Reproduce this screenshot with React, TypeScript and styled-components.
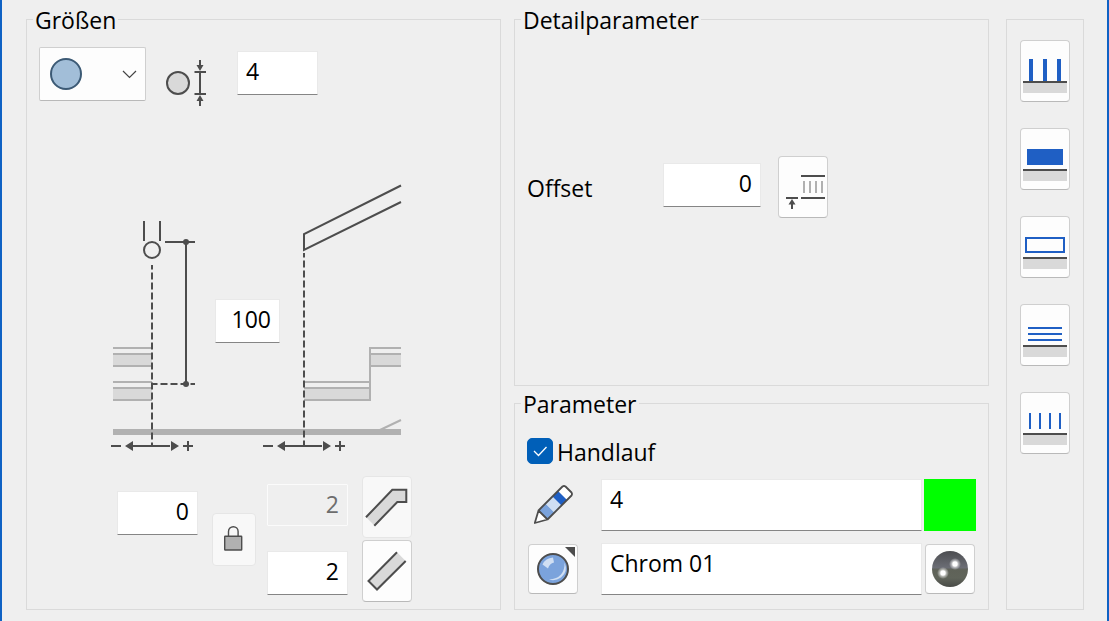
import React, { useState } from "react";
import styled, { createGlobalStyle, css } from "styled-components";

const ink = "#4d4d4d";
const blue = "#1f5fc4";
const grey = "#d9d9d9";
const stepGrey = "#b1b1b1";

const GlobalStyle = createGlobalStyle`
  *, *::before, *::after { box-sizing: border-box; }
  body {
    margin: 0;
    background: #efefef;
    color: #000;
    font: 23px/30px "Open Sans", "Noto Sans", sans-serif;
  }
  svg { display: block; flex: none; overflow: visible; }
`;

const Page = styled.main`
  display: grid;
  grid-template-columns: minmax(0, 1fr) 13px minmax(0, 1fr) 17px 78px;
  min-height: 100vh;
  padding: 3px 23px 11px 24px;
  border: solid #0f62c4;
  border-width: 0 2px;
`;

const LeftColumn = styled.div`
  display: flex;
  flex-direction: column;
`;

const MiddleColumn = styled.div`
  grid-column: 3;
  display: flex;
  flex-direction: column;
  gap: 1px;
`;

const Group = styled.fieldset<{ $grow?: boolean }>`
  flex: ${(p) => (p.$grow ? "1" : "none")};
  min-width: 0;
  margin: 0;
  padding: 0 12px;
  border: 1px solid #dadada;
`;

const Legend = styled.legend`
  margin-left: -6px;
  padding: 2px 2px 0;
`;

const TypeBar = styled.nav`
  grid-column: 5;
  display: flex;
  flex-direction: column;
  align-items: center;
  gap: 26px;
  margin-top: 16px;
  padding: 20px 0;
  border: 1px solid #dadada;
`;

const ToolButton = styled.button<{ $size?: "tall" | "square" | "lock" }>`
  flex: none;
  display: block;
  width: 50px;
  height: 62px;
  padding: 0;
  border: 1px solid #cfcfcf;
  border-bottom-color: #b9b9b9;
  border-radius: 4px;
  background: #fdfdfd;
  ${(p) => p.$size === "square" && css`height: 50px;`}
  ${(p) => p.$size === "lock" && css`width: 44px; height: 53px;`}
  &:disabled {
    border-color: #e6e6e6;
    background: #f8f8f8;
  }
  svg { margin: -1px; }
`;

const Field = styled.input<{ $width?: number; $align?: string }>`
  width: ${(p) => (p.$width ? `${p.$width}px` : "100%")};
  height: 44px;
  min-width: 0;
  margin: 0;
  padding: 0 8px 5px;
  border: 1px solid #e9e9e9;
  border-bottom-color: #858585;
  border-radius: 1px;
  background: #fff;
  color: #000;
  font: inherit;
  text-align: ${(p) => p.$align ?? "right"};
  &:disabled {
    height: 42px;
    padding-bottom: 3px;
    border-color: #fbfbfb;
    background: #efefef;
    color: #6d6d6d;
  }
`;

const TallField = styled(Field)`
  height: 52px;
  padding-bottom: 12px;
`;

const ProfileRow = styled.div`
  display: flex;
  align-items: flex-start;
  padding-top: 12px;
`;

const Combo = styled.label`
  display: grid;
  width: 107px;
  height: 54px;
  margin-right: 20px;
  > * { grid-area: 1 / 1; }
  svg { pointer-events: none; }
`;

const ComboSelect = styled.select`
  appearance: none;
  width: 100%;
  height: 100%;
  border: 1px solid #cfcfcf;
  border-bottom-color: #b9b9b9;
  border-radius: 2px;
  background: #fdfdfd;
`;

const DiameterMark = styled.div`
  padding-top: 13px;
`;

const DiameterField = styled.div`
  margin: 4px 0 0 30px;
`;

const Diagram = styled.div`
  position: relative;
  width: 294px;
  margin: 78px 0 20px 71px;
`;

const DiagramField = styled.div`
  position: absolute;
  left: 105px;
  top: 115px;
`;

const EndRow = styled.div`
  display: flex;
  align-items: center;
  padding: 0 0 7px 78px;
`;

const StartField = styled.div`
  align-self: flex-start;
  margin: 15px 14px 0 0;
`;

const EndFields = styled.div`
  align-self: stretch;
  display: flex;
  flex-direction: column;
  justify-content: space-between;
  margin: 0 14px 0 11px;
  padding: 8px 0 7px;
`;

const EndButtons = styled.div`
  display: grid;
  gap: 2px;
`;

const OffsetRow = styled.div`
  display: grid;
  grid-template-columns: 136px 98px 50px;
  align-items: center;
  padding-top: 121px;
  ${Field} { margin-bottom: 4px; }
  ${ToolButton} { margin-left: 17px; }
`;

const Caption = styled.span`
  display: block;
  padding-top: 2px;
`;

const CheckRow = styled.label`
  display: flex;
  align-items: center;
  gap: 4px;
  height: 30px;
  margin: 17px 0 13px;
`;

const CheckBox = styled.span`
  display: grid;
  width: 26px;
  height: 26px;
  > * { grid-area: 1 / 1; }
  svg { pointer-events: none; }
`;

const CheckInput = styled.input`
  appearance: none;
  width: 26px;
  height: 26px;
  margin: 0;
  border: 1px solid #005fb8;
  border-radius: 5px;
  background: #fff;
  &:checked { background: #005fb8; }
`;

const ParameterGrid = styled.div`
  display: grid;
  grid-template-columns: 52px minmax(0, 1fr) 52px;
  row-gap: 12px;
  align-items: center;
  justify-items: center;
  padding-bottom: 14px;
`;

const FieldCell = styled.div`
  display: flex;
  justify-self: stretch;
  padding: 0 2px 0 22px;
`;

const Swatch = styled.button`
  width: 52px;
  height: 52px;
  padding: 0;
  border: 0;
  background: #0f0;
`;

function Profile() {
  return (
    <svg width="107" height="54" viewBox="39 47 107 54" fill="none" aria-hidden="true">
      <circle cx="66" cy="74" r="15" fill="#a2bed8" stroke="#3c5a75" strokeWidth="2" />
      <path d="M123 71l6.500 6.500L136 71" stroke="#444" strokeWidth="1.200" />
    </svg>
  );
}

function Diameter() {
  return (
    <svg width="41" height="46" viewBox="166 60 41 46" aria-hidden="true">
      <circle cx="178" cy="83" r="11" fill={grey} stroke={ink} strokeWidth="2" />
      <path d="M194.500 72H206M194.500 94H206M200 72V94M200 60V66M200 100V106" stroke={ink} strokeWidth="2" />
      <path d="M196.500 65h7L200 71zM196.500 101h7L200 95z" fill={ink} />
    </svg>
  );
}

function Shift({ x }: { x: number }) {
  return (
    <g transform={`translate(${x} 446)`}>
      <path d="M-41 0h10M-22 0h40M31 0h10M36-5V5" stroke={ink} strokeWidth="2" />
      <path d="M-27 0l8-5v10zM27 0l-8-5v10z" fill={ink} />
    </g>
  );
}

function StairDrawing() {
  return (
    <svg width="294" height="272" viewBox="110 184 294 272" fill="none" aria-hidden="true">
      <path d="M113 354h39v12h-39zM113 388h39v12h-39zM304 388h66v12h-66zM370 354h31v12h-31z" fill={grey} />
      <path
        d="M113 348h39M113 354h39M113 366h39M113 382h39M113 388h39M113 400h39M304 382h66M304 388h66M304 400h67M370 401V347M370 348h31M370 354h31M370 366h31M380 430l21-10"
        stroke={stepGrey}
        strokeWidth="2"
      />
      <path d="M113 429h288v6H113z" fill={stepGrey} />
      <g stroke={ink} strokeWidth="2">
        <path d="M144 221v20M160 221v20M165 242h30M186 242v142" />
        <circle cx="152" cy="250" r="8" />
        <path d="M401 185.500L304 234V250L401 202" />
        <path d="M152 265V445" strokeDasharray="7 3" strokeDashoffset="2.500" />
        <path d="M304 253V445" strokeDasharray="7 3" strokeDashoffset="2.500" />
        <path d="M152 384h43" strokeDasharray="7 3" strokeDashoffset="1.500" />
      </g>
      <circle cx="186" cy="242" r="3" fill={ink} />
      <circle cx="186" cy="384" r="3" fill={ink} />
      <Shift x={152} />
      <Shift x={304} />
    </svg>
  );
}

function Lock() {
  return (
    <svg width="44" height="53" viewBox="212 513 44 53" aria-hidden="true">
      <path d="M228.500 536v-4.500a4.800 4.800 0 0 1 9.600 0v4.500" fill="none" stroke={ink} strokeWidth="1.400" />
      <rect x="224.700" y="536.300" width="17" height="13.700" rx=".5" fill={stepGrey} stroke={ink} strokeWidth="1.400" />
    </svg>
  );
}

function BentEnd() {
  return (
    <svg width="50" height="62" viewBox="362 476 50 62" aria-hidden="true">
      <path d="M366 517l26.300-27.300h14V502h-9l-23 23.500z" fill={grey} />
      <path d="M366 517.300l26.300-27.600h14V502h-9l-23 23.700" fill="none" stroke={ink} strokeWidth="2" />
    </svg>
  );
}

function StraightEnd() {
  return (
    <svg width="50" height="62" viewBox="362 540 50 62" aria-hidden="true">
      <path d="M397 552.300L368.500 581l8.500 8.500 28.700-28.500z" fill={grey} />
      <path d="M397 552.300L368.500 581l8.500 8.500 28.700-28.500" fill="none" stroke={ink} strokeWidth="2" />
    </svg>
  );
}

function OffsetIcon() {
  return (
    <svg width="50" height="62" viewBox="778 156 50 62" aria-hidden="true">
      <path d="M804 181v12M810 181v12M816 181v12M822 181v12" stroke={stepGrey} strokeWidth="2" />
      <path d="M801 176h24M801 198h24M786 198h12M792 203v6" stroke={ink} strokeWidth="2" />
      <path d="M788.500 204.500h7L792 199z" fill={ink} />
    </svg>
  );
}

function Pencil() {
  return (
    <svg width="52" height="52" viewBox="527 479 52 52" aria-hidden="true">
      <path d="M538.500 510.500l-3.500 12.700 12.700-3.700-4.200-5z" fill="#fff" />
      <path d="M558 491l4.500-4.500q1.500-1 3 0l6 6q1 1.500 0 3l-4.500 4.500z" fill="#fff" />
      <path d="M538.500 510.500l7-7 9 9-7 7z" fill="#7ba3dc" />
      <path d="M545.500 503.500l7-7 9 9-7 7z" fill="#d0dff3" />
      <path d="M552.500 496.500l5.500-5.500 9 9-5.500 5.500z" fill={blue} />
      <path
        d="M538.500 510.500l24-24q1.500-1 3 0l6 6q1 1.500 0 3l-24 24-12.700 3.500zl9 9"
        fill="none"
        stroke={ink}
        strokeWidth="1.800"
        strokeLinejoin="round"
      />
    </svg>
  );
}

function MaterialBall() {
  return (
    <svg width="50" height="50" viewBox="528 544 50 50" aria-hidden="true">
      <path d="M565 547h10v10z" fill={ink} />
      <circle cx="553" cy="569" r="15" fill="#7ba3dc" stroke={ink} strokeWidth="2" />
      <path d="M542.500 564.500q3-6.500 10.500-7l1 5q-4.500 1-6 6z" fill="#d0dff3" />
      <path d="M564.500 562.500q4 9-3.500 15-6 4-12 2 8-.5 12-5 4-5 3.500-12z" fill="#d0dff3" />
    </svg>
  );
}

function ChromeBall() {
  return (
    <svg width="50" height="50" viewBox="925 544 50 50" aria-hidden="true">
      <defs>
        <linearGradient id="chrome" x1="0" y1="0" x2="0" y2="1">
          <stop offset="0" stopColor="#4c4d50" />
          <stop offset=".46" stopColor="#6b6d75" />
          <stop offset=".52" stopColor="#5f6258" />
          <stop offset=".75" stopColor="#60645a" />
          <stop offset="1" stopColor="#484a46" />
        </linearGradient>
        <radialGradient id="glint">
          <stop offset=".35" stopColor="#fff" />
          <stop offset=".6" stopColor="#fff" stopOpacity=".5" />
          <stop offset="1" stopColor="#fff" stopOpacity="0" />
        </radialGradient>
      </defs>
      <circle cx="950" cy="569" r="18" fill="url(#chrome)" />
      <circle cx="955" cy="564" r="6" fill="url(#glint)" />
      <circle cx="943" cy="573" r="6" fill="url(#glint)" />
    </svg>
  );
}

const railTypes = [
  { name: "Pfosten", art: <path d="M11 41V19M25 41V19M39 41V19" stroke={blue} strokeWidth="4" /> },
  { name: "Platte", art: <rect x="7" y="21" width="36" height="16" fill={blue} /> },
  { name: "Rahmen", art: <rect x="6" y="22" width="38" height="14" fill="none" stroke={blue} strokeWidth="2" /> },
  { name: "Gurte", art: <path d="M8 24h34M8 30h34M8 36h34" stroke={blue} strokeWidth="2" /> },
  { name: "Stäbe", art: <path d="M10 21v16M20 21v16M30 21v16M40 21v16" stroke={blue} strokeWidth="2" /> },
];

export default function App() {
  const [handrail, setHandrail] = useState(true);
  return (
    <>
      <GlobalStyle />
      <Page>
        <LeftColumn>
          <Group $grow>
            <Legend>Größen</Legend>
            <ProfileRow>
              <Combo>
                <ComboSelect aria-label="Profil">
                  <option value="round" aria-label="Rund" />
                </ComboSelect>
                <Profile />
              </Combo>
              <DiameterMark>
                <Diameter />
              </DiameterMark>
              <DiameterField>
                <Field $width={81} $align="left" defaultValue="4" aria-label="Durchmesser" />
              </DiameterField>
            </ProfileRow>
            <Diagram>
              <StairDrawing />
              <DiagramField>
                <Field $width={65} defaultValue="100" aria-label="Höhe" />
              </DiagramField>
            </Diagram>
            <EndRow>
              <StartField>
                <Field $width={81} defaultValue="0" aria-label="Anfang" />
              </StartField>
              <ToolButton $size="lock" disabled aria-label="Sperren">
                <Lock />
              </ToolButton>
              <EndFields>
                <Field $width={81} defaultValue="2" disabled aria-label="Ende oben" />
                <Field $width={81} defaultValue="2" aria-label="Ende unten" />
              </EndFields>
              <EndButtons>
                <ToolButton disabled aria-label="Abgewinkeltes Ende">
                  <BentEnd />
                </ToolButton>
                <ToolButton aria-label="Gerades Ende">
                  <StraightEnd />
                </ToolButton>
              </EndButtons>
            </EndRow>
          </Group>
        </LeftColumn>

        <MiddleColumn>
          <Group $grow>
            <Legend>Detailparameter</Legend>
            <OffsetRow>
              <label htmlFor="offset">
                <Caption>Offset</Caption>
              </label>
              <Field id="offset" defaultValue="0" />
              <ToolButton aria-label="Bezug des Offsets">
                <OffsetIcon />
              </ToolButton>
            </OffsetRow>
          </Group>
          <Group>
            <Legend>Parameter</Legend>
            <CheckRow>
              <CheckBox>
                <CheckInput type="checkbox" checked={handrail} onChange={(e) => setHandrail(e.target.checked)} />
                <svg width="26" height="26" fill="none" aria-hidden="true">
                  <path d="M7 13l4.500 4.500L19.500 9" stroke="#fff" strokeWidth="1.300" />
                </svg>
              </CheckBox>
              <Caption>Handlauf</Caption>
            </CheckRow>
            <ParameterGrid>
              <Pencil />
              <FieldCell>
                <TallField $align="left" defaultValue="4" aria-label="Stift" />
              </FieldCell>
              <Swatch aria-label="Stiftfarbe" />
              <ToolButton $size="square" aria-label="Material wählen">
                <MaterialBall />
              </ToolButton>
              <FieldCell>
                <TallField $align="left" defaultValue="Chrom 01" aria-label="Material" />
              </FieldCell>
              <ToolButton $size="square" aria-label="Materialvorschau">
                <ChromeBall />
              </ToolButton>
            </ParameterGrid>
          </Group>
        </MiddleColumn>

        <TypeBar aria-label="Geländertyp">
          {railTypes.map((type) => (
            <ToolButton key={type.name} aria-label={type.name}>
              <svg width="50" height="62" aria-hidden="true">
                {type.art}
                <rect x="3" y="43" width="44" height="10" fill={grey} />
                <rect x="3" y="41" width="44" height="2" fill={ink} />
              </svg>
            </ToolButton>
          ))}
        </TypeBar>
      </Page>
    </>
  );
}
